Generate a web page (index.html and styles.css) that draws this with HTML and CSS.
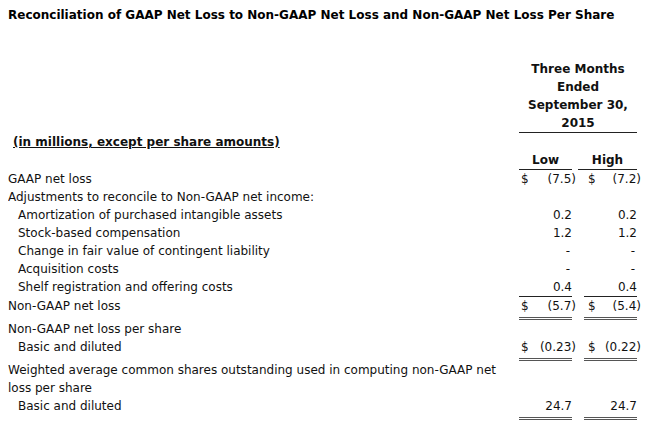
FILE: index.html
```html
<!DOCTYPE html>
<html>
<head>
<meta charset="utf-8">
<link rel="stylesheet" href="styles.css">
</head>
<body>
<h1 class="title">Reconciliation of GAAP Net Loss to Non-GAAP Net Loss and Non-GAAP Net Loss Per Share</h1>
<table class="recon">
  <colgroup>
    <col class="c-label">
    <col class="c-cur">
    <col class="c-val">
    <col class="c-gap">
    <col class="c-gap">
    <col class="c-cur">
    <col class="c-val">
  </colgroup>
  <tr>
    <td></td>
    <td colspan="6" class="period">Three Months<br>Ended<br>September 30,<br>2015</td>
  </tr>
  <tr>
    <td class="units"><span>(in millions, except per share amounts)</span></td>
    <td colspan="6"></td>
  </tr>
  <tr>
    <td></td>
    <td colspan="2" class="colhead">Low</td>
    <td></td>
    <td colspan="3" class="colhead">High</td>
  </tr>
  <tr>
    <td class="label">GAAP net loss</td>
    <td class="cur">$</td><td class="val">(7.5<span class="rp">)</span></td>
    <td></td><td></td>
    <td class="cur cur-h">$</td><td class="val">(7.2<span class="rp">)</span></td>
  </tr>
  <tr>
    <td class="label">Adjustments to reconcile to Non-GAAP net income:</td>
    <td></td><td></td><td></td><td></td><td></td><td></td>
  </tr>
  <tr>
    <td class="label sub">Amortization of purchased intangible assets</td>
    <td></td><td class="val">0.2</td>
    <td></td><td></td>
    <td></td><td class="val">0.2</td>
  </tr>
  <tr>
    <td class="label sub">Stock-based compensation</td>
    <td></td><td class="val">1.2</td>
    <td></td><td></td>
    <td></td><td class="val">1.2</td>
  </tr>
  <tr>
    <td class="label sub">Change in fair value of contingent liability</td>
    <td></td><td class="val dash">-</td>
    <td></td><td></td>
    <td></td><td class="val dash">-</td>
  </tr>
  <tr>
    <td class="label sub">Acquisition costs</td>
    <td></td><td class="val dash">-</td>
    <td></td><td></td>
    <td></td><td class="val dash">-</td>
  </tr>
  <tr>
    <td class="label sub">Shelf registration and offering costs</td>
    <td class="single"></td><td class="val single">0.4</td>
    <td></td><td></td>
    <td class="single"></td><td class="val single">0.4</td>
  </tr>
  <tr>
    <td class="label">Non-GAAP net loss</td>
    <td class="cur double">$</td><td class="val double">(5.7<span class="rp">)</span></td>
    <td></td><td></td>
    <td class="cur cur-h double">$</td><td class="val double">(5.4<span class="rp">)</span></td>
  </tr>
  <tr>
    <td class="label">Non-GAAP net loss per share</td>
    <td></td><td></td><td></td><td></td><td></td><td></td>
  </tr>
  <tr>
    <td class="label sub">Basic and diluted</td>
    <td class="cur double">$</td><td class="val double">(0.23<span class="rp">)</span></td>
    <td></td><td></td>
    <td class="cur cur-h double">$</td><td class="val double">(0.22<span class="rp">)</span></td>
  </tr>
  <tr>
    <td class="label wrap">Weighted average common shares outstanding used in computing non-GAAP net loss per share</td>
    <td></td><td></td><td></td><td></td><td></td><td></td>
  </tr>
  <tr>
    <td class="label sub">Basic and diluted</td>
    <td class="double"></td><td class="val double">24.7</td>
    <td></td><td></td>
    <td class="double"></td><td class="val double">24.7</td>
  </tr>
</table>
</body>
</html>
```

FILE: styles.css
```css
html, body {
  background: #ffffff;
}

body {
  margin: 8px;
  color: #111111;
  font-family: Verdana, "DejaVu Sans", sans-serif;
  font-size: 12px;
}

.title {
  margin: 0;
  font-size: 12px;
  font-weight: bold;
  line-height: 15px;
  color: #000000;
}

.recon {
  margin-top: 37px;
  border-collapse: separate;
  border-spacing: 0;
  table-layout: fixed;
  width: 629px;
}

.c-label { width: 511px; }
.c-cur { width: 12px; }
.c-val { width: 41px; }
.c-gap { width: 6px; }

.recon td {
  padding: 0;
  line-height: 18px;
  vertical-align: top;
  white-space: nowrap;
}

.recon td.wrap {
  white-space: normal;
  padding-right: 8px;
}

.period {
  text-align: center;
  font-weight: bold;
  border-bottom: 1px solid #222222;
}

.units {
  padding-left: 5px !important;
  font-weight: bold;
}

.units span {
  text-decoration: underline;
}

.colhead {
  text-align: center;
  font-weight: bold;
  border-bottom: 1px solid #222222;
}

.sub {
  padding-left: 10px !important;
}

.cur {
  padding-left: 2px !important;
}

.cur-h {
  padding-left: 4px !important;
}

.val {
  text-align: right;
}

.rp {
  margin-right: -4px;
}

.dash {
  padding-right: 2px !important;
}

.single {
  border-bottom: 1px solid #222222;
}

.double {
  padding-bottom: 2px !important;
  border-bottom: 3px double #555555;
}
```
